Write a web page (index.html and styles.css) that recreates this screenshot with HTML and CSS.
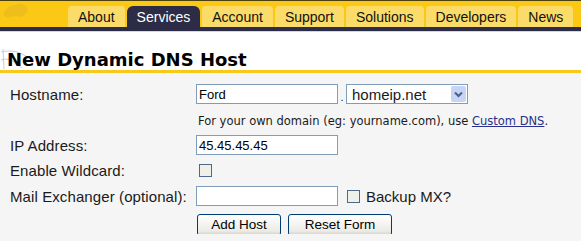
FILE: index.html
```html
<!DOCTYPE html>
<html lang="en">
<head>
  <meta charset="UTF-8">
  <title>New Dynamic DNS Host</title>
  <link rel="stylesheet" href="styles.css">
</head>
<body>
  <div class="topbar">
    <svg class="logo" width="60" height="26" viewBox="0 0 60 26">
      <path d="M4 10 L10 5 L16 4 L20 2 L26 5 L28 9 L25 14 L20 16 L14 15 L8 17 L4 15 Z" fill="#eebf1c"/>
    </svg>
    <ul class="tabs">
      <li class="tab">About</li>
      <li class="tab active">Services</li>
      <li class="tab">Account</li>
      <li class="tab">Support</li>
      <li class="tab">Solutions</li>
      <li class="tab">Developers</li>
      <li class="tab">News</li>
    </ul>
  </div>
  <div class="navline"></div>

  <div class="heading">
    <svg class="globe" width="30" height="22" viewBox="0 0 30 22">
      <path d="M1 4 Q15 0 29 10 M3 1 L4 21 M1 12 Q10 8 22 20" stroke="#b8c0d0" stroke-width="0.8" fill="none"/>
    </svg>
    <h1>New Dynamic DNS Host</h1>
  </div>

  <form class="hostform">
    <div class="row">
      <label class="lbl">Hostname:</label>
      <div class="field">
        <input class="txt" type="text" value="Ford">
        <span class="dot">.</span>
        <div class="select">
          <span>homeip.net</span>
          <span class="arrow">
            <svg width="9" height="7" viewBox="0 0 9 7"><path d="M1 1.5 L4.5 5 L8 1.5" stroke="#4d6185" stroke-width="2" fill="none"/></svg>
          </span>
        </div>
      </div>
    </div>
    <div class="row note">
      <span class="lbl"></span>
      <p class="help">For your own domain (eg: yourname.com), use <a href="#">Custom DNS</a>.</p>
    </div>
    <div class="row">
      <label class="lbl">IP Address:</label>
      <div class="field"><input class="txt" type="text" value="45.45.45.45"></div>
    </div>
    <div class="row">
      <label class="lbl">Enable Wildcard:</label>
      <div class="field"><span class="check"></span></div>
    </div>
    <div class="row">
      <label class="lbl">Mail Exchanger (optional):</label>
      <div class="field">
        <input class="txt" type="text" value="">
        <span class="check mx"></span>
        <span class="backup">Backup MX?</span>
      </div>
    </div>
    <div class="row buttons">
      <span class="lbl"></span>
      <div class="field">
        <button type="button" class="btn">Add Host</button>
        <button type="button" class="btn reset">Reset Form</button>
      </div>
    </div>
  </form>
</body>
</html>
```

FILE: styles.css
```css
body {
  margin: 0;
  background-color: #f5f5f5;
  font-family: 'Liberation Sans', Arial, sans-serif;
  color: #1a1a1a;
}
.topbar {
  position: relative;
  height: 26px;
  background-color: #fac815;
  border-top: 1px solid #4a3f10;
  display: flex;
  align-items: flex-end;
}
.logo {
  position: absolute;
  left: 0;
  top: 0;
}
.tabs {
  list-style: none;
  margin: 0 0 0 68px;
  padding: 0;
  display: flex;
  gap: 2px;
}
.tab {
  height: 21px;
  line-height: 22px;
  padding: 0 10px;
  background-color: #fcdc68;
  border-radius: 4px 4px 0 0;
  font-size: 14px;
  color: #111;
}
.tab.active {
  background-color: #2c2c46;
  color: #fff;
  border-radius: 6px 6px 0 0;
}
.navline {
  height: 4px;
  background-color: #2c2c46;
  border-bottom: 1px solid #d6d6de;
}
.heading {
  position: relative;
  background-color: #fff;
  height: 38px;
  border-bottom: 3px solid #f7c91c;
  padding-left: 7px;
  display: flex;
  align-items: flex-end;
}
.globe {
  position: absolute;
  left: 0;
  top: 16px;
}
.heading h1 {
  position: relative;
  margin: 0;
  line-height: 20px;
  font-family: 'DejaVu Sans', Verdana, sans-serif;
  font-size: 18px;
  font-weight: bold;
  color: #000;
}
.hostform {
  padding: 8.25px 0 0 10px;
}
.row {
  display: flex;
  align-items: center;
  height: 25.5px;
}
.lbl {
  width: 186px;
  flex: none;
  font-size: 15px;
  letter-spacing: 0.1px;
  color: #1a1a1a;
}
.field {
  display: flex;
  align-items: center;
}
.txt {
  box-sizing: border-box;
  width: 142px;
  height: 20px;
  margin: 0;
  padding: 1px 2px;
  border: 1px solid #7f9db9;
  background-color: #fff;
  font-family: 'Liberation Sans', Arial, sans-serif;
  font-size: 13px;
  color: #000;
}
.dot {
  width: 8px;
  text-align: center;
  font-size: 11px;
  align-self: flex-end;
  line-height: 14px;
}
.select {
  box-sizing: border-box;
  width: 122px;
  height: 20px;
  border: 1px solid #7f9db9;
  background-color: #fff;
  display: flex;
  align-items: center;
  justify-content: space-between;
  padding: 0 1px 0 5px;
  font-size: 15px;
}
.arrow {
  width: 15px;
  height: 16px;
  background-color: #c5d4f7;
  border-radius: 2px;
  display: flex;
  align-items: center;
  justify-content: center;
}
.help {
  margin: 3px 0 0 2px;
  font-family: 'DejaVu Sans', Tahoma, sans-serif;
  font-size: 11.5px;
  color: #1a1a1a;
}
.help a {
  color: #2b2f8c;
}
.check {
  box-sizing: border-box;
  width: 13px;
  height: 13px;
  border: 1px solid #4f6a88;
  background-color: #f0f0ea;
  margin-left: 3px;
}
.check.mx {
  margin-left: 9px;
}
.backup {
  margin-left: 6px;
  font-size: 15px;
}
.buttons .field {
  margin-top: 6px;
}
.btn {
  box-sizing: border-box;
  width: 84px;
  height: 22px;
  padding: 0;
  margin: 0 0 0 1px;
  border: 1px solid #003c74;
  border-radius: 3px;
  background: linear-gradient(#ffffff, #ecebe6 80%, #d6d0c5);
  font-family: 'Liberation Sans', Arial, sans-serif;
  font-size: 13.5px;
  color: #000;
}
.btn.reset {
  width: 104px;
  margin-left: 7px;
}
```
